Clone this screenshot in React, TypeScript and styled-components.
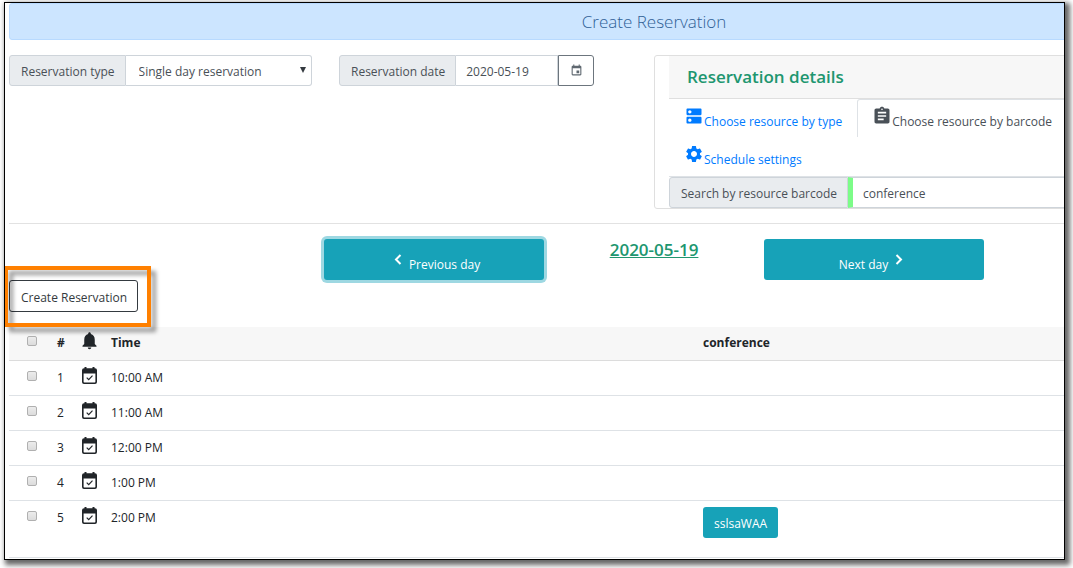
import React from 'react';
import styled, { createGlobalStyle, css } from 'styled-components';
import {
  MdAssignment,
  MdDns,
  MdEvent,
  MdNotifications,
  MdSettings,
} from 'react-icons/md';

const GlobalStyle = createGlobalStyle`
  *, *::before, *::after { box-sizing: border-box; }
  body {
    margin: 0;
    background: #fff;
    color: #212529;
    font: 400 12px/20px "Open Sans", "Noto Sans", sans-serif;
  }
  button, input, select { font: inherit; margin: 0; }
`;

const Frame = styled.main`
  position: relative;
  margin: 2px 8px 8px 4px;
  padding: 0 0 1px 4px;
  border: 1px solid #000;
  box-shadow: 3px 3px 5px 2px rgba(0, 0, 0, 0.6);
  overflow: hidden;
`;

const Content = styled.div`
  width: calc(122% + 3px);
`;

const Banner = styled.h1`
  margin: 0 0 15px;
  padding: 5px 0;
  border: 1px solid #b8daff;
  border-radius: 3px;
  background: #cce5ff;
  color: #2f5f96;
  font-size: 17px;
  font-weight: 300;
  line-height: 25px;
  text-align: center;
`;

const TopRow = styled.section`
  display: grid;
  grid-template-columns: 303px 255px 1fr;
  column-gap: 27px;
  align-items: start;
`;

const Group = styled.div`
  display: flex;
  height: 31px;
`;

const GroupLabel = styled.label`
  padding: 6px 10px 3px 11px;
  border: 1px solid #ced4da;
  border-radius: 3px 0 0 3px;
  background: #e9ecef;
  color: #495057;
  white-space: nowrap;
`;

const fieldBox = css`
  flex: 1;
  min-width: 0;
  border: 1px solid #ced4da;
  border-left: 0;
  background-color: #fff;
  color: #495057;
  outline: 0;
`;

const SelectWrap = styled.div`
  display: grid;
  flex: 1;
  min-width: 0;
  align-items: center;

  > * { grid-area: 1 / 1; }
  > svg { justify-self: end; margin: 0 6px 2px 0; pointer-events: none; }
`;

const Select = styled.select`
  ${fieldBox}
  width: 100%;
  height: 31px;
  padding: 2px 20px 0 13px;
  border-radius: 0 3px 3px 0;
  appearance: none;
`;

const Input = styled.input<{ $valid?: boolean }>`
  ${fieldBox}
  padding: 2px 10px 0;
  ${(p) => p.$valid && css`border-left: 5px solid #7cfc88;`}
`;

const DateButton = styled.button`
  display: flex;
  align-items: center;
  justify-content: center;
  width: 36px;
  padding: 0;
  border: 1px solid #6c757d;
  border-radius: 0 3px 3px 0;
  background: #fff;
  color: #5f6870;
`;

const Card = styled.section`
  margin-left: 33px;
  padding-left: 14px;
  border: 1px solid #dfdfdf;
  border-radius: 3px;
`;

const CardTitle = styled.h2`
  margin: 0;
  padding: 8px 18px 9px;
  border-bottom: 1px solid #dfdfdf;
  background: #f7f7f7;
  color: #20966f;
  font-size: 17px;
  font-weight: 600;
  line-height: 25px;
`;

const Tabs = styled.nav`
  display: flex;
  flex-wrap: wrap;
  padding: 0 90px 1px 0;
  border-bottom: 1px solid #dee2e6;
`;

const Tab = styled.a<{ $active?: boolean }>`
  display: flex;
  height: 38px;
  padding: 6px 14px 0 14px;
  border: 1px solid transparent;
  border-bottom: 0;
  border-radius: 3px 3px 0 0;
  color: #007bff;
  text-decoration: none;
  white-space: nowrap;
  ${(p) => p.$active && css`border-color: #dee2e6; color: #495057;`}

  span { padding-top: 6px; }
`;

const DayNav = styled.section`
  display: grid;
  grid-template-columns: repeat(3, 220px);
  justify-content: center;
  margin-top: 14px;
  padding-top: 15px;
  border-top: 1px solid #e2e2e2;
`;

const DayButton = styled.button<{ $focused?: boolean }>`
  display: flex;
  justify-content: center;
  gap: 7px;
  height: 41px;
  padding: 15px 0 0;
  border: 0;
  border-radius: 3px;
  background: #17a2b8;
  color: #fff;
  ${(p) => p.$focused && css`box-shadow: 0 0 0 3px #9ed8e2;`}

  span { padding-top: 1px; }
`;

const CurrentDay = styled.h2`
  margin: 0;
  color: #20966f;
  font-size: 17px;
  font-weight: 600;
  line-height: 22px;
  text-align: center;
  text-decoration: underline;
`;

const Actions = styled.div`
  position: relative;
  display: flex;
  padding-bottom: 15px;
`;

const CreateButton = styled.button`
  height: 32px;
  padding: 3px 10px 0 11px;
  border: 1px solid #343a40;
  border-radius: 3px;
  background: #fff;
  color: #343a40;
`;

const Highlight = styled.div`
  position: absolute;
  top: -14px;
  left: -5px;
  width: 147px;
  height: 61px;
  border: 4px solid #ff8000;
  filter: drop-shadow(5px 5px 2px rgba(0, 0, 0, 0.4));
  pointer-events: none;
`;

const Table = styled.table`
  width: 100%;
  table-layout: fixed;
  border-collapse: separate;
  border-spacing: 0;
`;

const Th = styled.th<{ $w?: string }>`
  width: ${(p) => p.$w ?? 'auto'};
  height: 34px;
  padding: 6px 3px 0;
  border-bottom: 1px solid #dcdcdc;
  background: #f7f7f7;
  font-weight: 700;
  text-align: left;
  vertical-align: top;
`;

const Td = styled.td`
  height: 35px;
  padding: 7px 3px 0;
  border-bottom: 1px solid #dee2e6;
  vertical-align: top;

  tr:last-child > & { height: 57px; }
`;

const Check = styled.input`
  display: block;
  appearance: none;
  width: 10px;
  height: 10px;
  margin: 3px auto 0;
  border: 1px solid #b0b0b0;
  border-radius: 2px;
  background: linear-gradient(#ececec, #dcdcdc);
`;

const IconBox = styled.span`
  display: flex;
  align-items: center;
  justify-content: center;
  width: 19px;
  height: 20px;
  margin-top: -3px;

  svg { flex: none; }
`;

const Booking = styled.button`
  display: block;
  height: 31px;
  margin-top: -1px;
  padding: 2px 11px 0;
  border: 0;
  border-radius: 3px;
  background: #17a2b8;
  color: #fff;
`;

const ChevronLeft = () => (
  <svg width="14" height="11" viewBox="-6 0 14 11" fill="none" stroke="currentColor" strokeWidth="2" aria-hidden="true">
    <path d="M6.500 1L2 5.500 6.500 10" />
  </svg>
);

const ChevronRight = () => (
  <svg width="14" height="11" viewBox="0 0 14 11" fill="none" stroke="currentColor" strokeWidth="2" aria-hidden="true">
    <path d="M1.500 1L6 5.500 1.500 10" />
  </svg>
);

const CalendarCheck = () => (
  <svg width="15" height="17" viewBox="0 0 15 17" aria-hidden="true">
    <path
      fill="currentColor"
      fillRule="evenodd"
      d="M2.500 0h2v1.200h6V0h2v1.200h.5a2 2 0 0 1 2 2V15a2 2 0 0 1-2 2H2a2 2 0 0 1-2-2V3.200a2 2 0 0 1 2-2h.5zM1.600 6.500v8.300c0 .4.300.7.700.7h10.400c.4 0 .7-.3.700-.7V6.500z"
    />
    <path d="M4.700 10.700l2 2 3.800-4" fill="none" stroke="currentColor" strokeWidth="1.200" />
  </svg>
);

const slots = [
  { time: '10:00 AM' },
  { time: '11:00 AM' },
  { time: '12:00 PM' },
  { time: '1:00 PM' },
  { time: '2:00 PM', booking: 'sslsaWAA' },
];

export default function App() {
  return (
    <>
      <GlobalStyle />
      <Frame>
        <Content>
          <Banner>Create Reservation</Banner>

          <TopRow>
            <Group>
              <GroupLabel htmlFor="type">Reservation type</GroupLabel>
              <SelectWrap>
                <Select id="type" defaultValue="single">
                  <option value="single">Single day reservation</option>
                </Select>
                <svg width="6" height="6" viewBox="0 0 6 6" aria-hidden="true">
                  <path d="M0 0h6L3 6z" fill="#343a40" />
                </svg>
              </SelectWrap>
            </Group>

            <Group>
              <GroupLabel htmlFor="date">Reservation date</GroupLabel>
              <Input id="date" type="text" defaultValue="2020-05-19" />
              <DateButton type="button" aria-label="Open calendar">
                <MdEvent size={13} />
              </DateButton>
            </Group>

            <Card>
              <CardTitle>Reservation details</CardTitle>
              <Tabs>
                <Tab href="#type">
                  <MdDns size={20} />
                  <span>Choose resource by type</span>
                </Tab>
                <Tab href="#barcode" $active>
                  <MdAssignment size={20} />
                  <span>Choose resource by barcode</span>
                </Tab>
                <Tab href="#settings">
                  <MdSettings size={20} />
                  <span>Schedule settings</span>
                </Tab>
              </Tabs>
              <Group>
                <GroupLabel htmlFor="barcode">Search by resource barcode</GroupLabel>
                <Input id="barcode" type="text" defaultValue="conference" $valid />
              </Group>
            </Card>
          </TopRow>

          <DayNav>
            <DayButton type="button" $focused>
              <ChevronLeft />
              <span>Previous day</span>
            </DayButton>
            <CurrentDay>2020-05-19</CurrentDay>
            <DayButton type="button">
              <span>Next day</span>
              <ChevronRight />
            </DayButton>
          </DayNav>

          <Actions>
            <CreateButton type="button">Create Reservation</CreateButton>
            <Highlight />
          </Actions>

          <Table>
            <thead>
              <tr>
                <Th $w="45px"><Check type="checkbox" aria-label="Select all" /></Th>
                <Th $w="23px">#</Th>
                <Th $w="31px"><IconBox><MdNotifications size={21} /></IconBox></Th>
                <Th $w="592px">Time</Th>
                <Th>conference</Th>
              </tr>
            </thead>
            <tbody>
              {slots.map((slot, i) => (
                <tr key={slot.time}>
                  <Td><Check type="checkbox" aria-label={`Select ${slot.time}`} /></Td>
                  <Td>{i + 1}</Td>
                  <Td><IconBox><CalendarCheck /></IconBox></Td>
                  <Td>{slot.time}</Td>
                  <Td>{slot.booking && <Booking type="button">{slot.booking}</Booking>}</Td>
                </tr>
              ))}
            </tbody>
          </Table>
        </Content>
      </Frame>
    </>
  );
}
